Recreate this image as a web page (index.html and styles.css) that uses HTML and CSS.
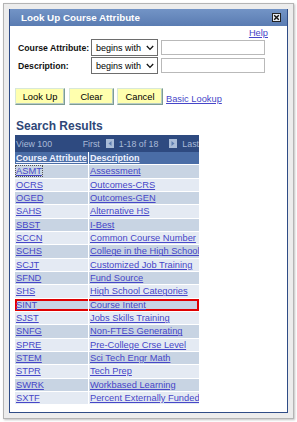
FILE: index.html
```html
<!DOCTYPE html>
<html lang="en">
<head>
  <meta charset="UTF-8" />
  <title>Look Up Course Attribute</title>
  <link rel="stylesheet" href="styles.css">
</head>
<body>
  <div class="frame">
    <div class="window">
      <div class="titlebar">
        <span class="title">Look Up Course Attribute</span>
        <span class="close">
          <svg width="9" height="9" viewBox="0 0 9 9"><rect x="0.5" y="0.5" width="8" height="8" fill="#e8ecf2" stroke="#222"/><path d="M2.2 2.2 L6.8 6.8 M6.8 2.2 L2.2 6.8" stroke="#111" stroke-width="1.4"/></svg>
        </span>
      </div>
      <div class="content">
        <div class="help-row"><a href="#">Help</a></div>

        <div class="field-row">
          <label class="campo">Course Attribute:</label>
          <div class="select">begins with
            <svg width="8" height="6" viewBox="0 0 8 6"><path d="M0.8 1 L4 4.4 L7.2 1" fill="none" stroke="#111" stroke-width="1.3"/></svg>
          </div>
          <div class="input"></div>
        </div>
        <div class="field-row">
          <label class="campo">Description:</label>
          <div class="select">begins with
            <svg width="8" height="6" viewBox="0 0 8 6"><path d="M0.8 1 L4 4.4 L7.2 1" fill="none" stroke="#111" stroke-width="1.3"/></svg>
          </div>
          <div class="input"></div>
        </div>

        <div class="buttons">
          <button class="btn btn-lookup">Look Up</button>
          <button class="btn btn-clear">Clear</button>
          <button class="btn btn-cancel">Cancel</button>
          <a href="#" class="basic">Basic Lookup</a>
        </div>

        <h2>Search Results</h2>

        <div class="grid">
          <div class="nav">
            <span class="view">View 100</span>
            <span class="first">First</span>
            <span class="arrow"><svg width="8" height="9" viewBox="0 0 8 9"><rect width="8" height="9" fill="#a9bcd8"/><path d="M5.5 2 L2.5 4.5 L5.5 7 Z" fill="#5d7db0"/></svg></span>
            <span class="count">1-18 of 18</span>
            <span class="arrow"><svg width="8" height="9" viewBox="0 0 8 9"><rect width="8" height="9" fill="#a9bcd8"/><path d="M2.5 2 L5.5 4.5 L2.5 7 Z" fill="#5d7db0"/></svg></span>
            <span class="last">Last</span>
          </div>
          <table class="resultados">
            <thead>
              <tr><th><a href="#">Course Attribute</a></th><th><a href="#">Description</a></th></tr>
            </thead>
            <tbody>
              <tr><td><a href="#" class="focado">ASMT</a></td><td><a href="#">Assessment</a></td></tr>
              <tr><td><a href="#">OCRS</a></td><td><a href="#">Outcomes-CRS</a></td></tr>
              <tr><td><a href="#">OGED</a></td><td><a href="#">Outcomes-GEN</a></td></tr>
              <tr><td><a href="#">SAHS</a></td><td><a href="#">Alternative HS</a></td></tr>
              <tr><td><a href="#">SBST</a></td><td><a href="#">I-Best</a></td></tr>
              <tr><td><a href="#">SCCN</a></td><td><a href="#">Common Course Number</a></td></tr>
              <tr><td><a href="#">SCHS</a></td><td><a href="#">College in the High School</a></td></tr>
              <tr><td><a href="#">SCJT</a></td><td><a href="#">Customized Job Training</a></td></tr>
              <tr><td><a href="#">SFND</a></td><td><a href="#">Fund Source</a></td></tr>
              <tr><td><a href="#">SHS</a></td><td><a href="#">High School Categories</a></td></tr>
              <tr class="destaque"><td><a href="#">SINT</a></td><td><a href="#">Course Intent</a></td></tr>
              <tr><td><a href="#">SJST</a></td><td><a href="#">Jobs Skills Training</a></td></tr>
              <tr><td><a href="#">SNFG</a></td><td><a href="#">Non-FTES Generating</a></td></tr>
              <tr><td><a href="#">SPRE</a></td><td><a href="#">Pre-College Crse Level</a></td></tr>
              <tr><td><a href="#">STEM</a></td><td><a href="#">Sci Tech Engr Math</a></td></tr>
              <tr><td><a href="#">STPR</a></td><td><a href="#">Tech Prep</a></td></tr>
              <tr><td><a href="#">SWRK</a></td><td><a href="#">Workbased Learning</a></td></tr>
              <tr><td><a href="#">SXTF</a></td><td><a href="#">Percent Externally Funded</a></td></tr>
            </tbody>
          </table>
        </div>
      </div>
    </div>
  </div>
</body>
</html>
```

FILE: styles.css
```css
body {
  margin: 0;
  background: white;
  font-family: 'Liberation Sans', Arial, sans-serif;
  font-size: 9.3px;
  color: #000;
}

a {
  color: #4646c8;
}

.frame {
  margin: 3px;
  width: 279px;
  height: 404px;
  padding: 5px;
  background: #ececec;
  border: 1px solid #b4b4b4;
  box-shadow: 1px 1px 2px rgba(0,0,0,0.25);
}

.window {
  height: 403px;
  background: white;
  border: 1px solid #2f4c86;
  border-top: none;
}

.titlebar {
  height: 17px;
  display: flex;
  align-items: center;
  justify-content: space-between;
  padding: 0 6px 0 11px;
  background: linear-gradient(to bottom, #7394c6, #5a7cb2);
}

.title {
  color: white;
  font-weight: bold;
  font-size: 9.8px;
}

.close {
  display: flex;
}

.content {
  padding-left: 5px;
}

.help-row {
  height: 12px;
  margin-top: 1px;
  text-align: right;
  padding-right: 19px;
  line-height: 12px;
}

.field-row {
  display: flex;
  align-items: center;
  height: 17px;
  margin-bottom: 1px;
}

.campo {
  width: 76px;
  flex-shrink: 0;
  padding-left: 3px;
  box-sizing: border-box;
  white-space: nowrap;
  font-weight: bold;
  font-size: 8.7px;
  color: #111;
}

.select {
  width: 67px;
  height: 17px;
  flex-shrink: 0;
  box-sizing: border-box;
  border: 1px solid #6d6d6d;
  display: flex;
  align-items: center;
  justify-content: space-between;
  padding: 0 3px 0 4px;
  white-space: nowrap;
  font-size: 9px;
  background: white;
}

.input {
  width: 104px;
  height: 15px;
  flex-shrink: 0;
  box-sizing: border-box;
  margin-left: 3px;
  border: 1px solid #b9b9b9;
}

.buttons {
  display: flex;
  align-items: center;
  margin-top: 14px;
  height: 17px;
}

.btn {
  height: 17px;
  font-family: inherit;
  font-size: 9.3px;
  background: #ffffae;
  border: 1px solid;
  border-color: #d8e8d8 #7d9c94 #7d9c94 #d8e8d8;
  box-shadow: inset -1px -1px 0 #b8ccc4;
  padding: 0;
  margin-right: 4px;
}

.btn-lookup { width: 50px; }
.btn-clear { width: 45px; margin-right: 3px; }
.btn-cancel { width: 46px; margin-right: 3px; }

.basic {
  align-self: flex-end;
  line-height: 11px;
}

h2 {
  margin: 12px 0 0 1px;
  height: 18px;
  font-size: 12px;
  line-height: 18px;
  color: #2f4778;
}

.grid {
  width: 184px;
  overflow: hidden;
}

.nav {
  height: 17px;
  background: #2e4a80;
  color: #a9bad8;
  display: flex;
  align-items: center;
  white-space: nowrap;
  font-size: 8.8px;
}

.view {
  padding-left: 1px;
  width: 73px;
}

.first {
  margin-right: 6px;
}

.arrow {
  display: flex;
}

.count {
  margin: 0 11px 0 5px;
}

.last {
  margin-left: 5px;
}

.resultados {
  width: 184px;
  border-collapse: collapse;
  table-layout: fixed;
}

.resultados th,
.resultados td {
  padding: 0 0 0 1px;
  text-align: left;
  white-space: nowrap;
  overflow: hidden;
  border-bottom: 1px solid white;
}

.resultados th:first-child,
.resultados td:first-child {
  width: 72px;
  border-right: 1px solid white;
}

.resultados th {
  height: 12.3px;
  background: #4a6da6;
  font-size: 9px;
}

.resultados th a {
  color: #eef2ff;
}

.resultados td {
  height: 12.33px;
  background: #e4eaf3;
}

.resultados tbody tr:nth-child(odd) td {
  background: #c8d4e3;
}

.focado {
  outline: 1px dotted #555;
}

.resultados tr.destaque td:first-child {
  box-shadow: inset 2px 2px 0 #e00000, inset 0 -2px 0 #e00000;
}

.resultados tr.destaque td:last-child {
  box-shadow: inset -2px 2px 0 #e00000, inset 0 -2px 0 #e00000;
}
```
